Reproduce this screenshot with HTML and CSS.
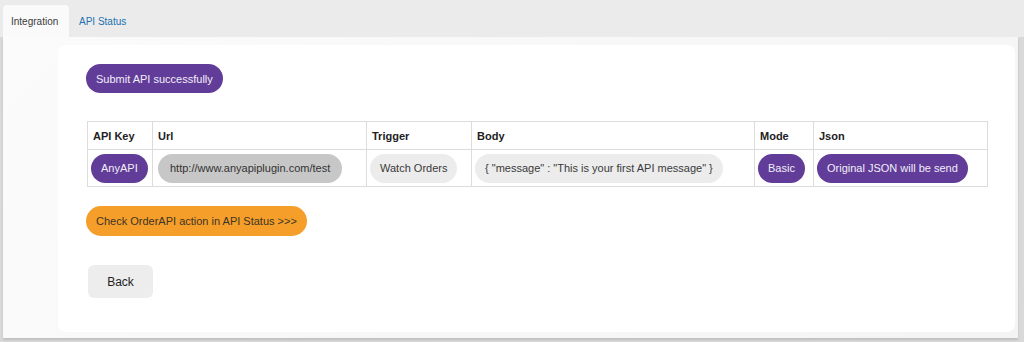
FILE: index.html
```html
<!DOCTYPE html>
<html>
<head>
<meta charset="utf-8">
<link rel="stylesheet" href="styles.css">
</head>
<body>
<div class="tabs">
  <div class="tab active">Integration</div>
  <div class="tab">API Status</div>
</div>
<div class="panel">
  <div class="card">
    <div class="pill purple">Submit API successfully</div>
    <table class="grid">
      <colgroup>
        <col class="c1"><col class="c2"><col class="c3"><col class="c4"><col class="c5"><col class="c6">
      </colgroup>
      <thead>
        <tr><th>API Key</th><th>Url</th><th>Trigger</th><th>Body</th><th>Mode</th><th>Json</th></tr>
      </thead>
      <tbody>
        <tr>
          <td><span class="pill purple">AnyAPI</span></td>
          <td><span class="pill grey url">http://www.anyapiplugin.com/test</span></td>
          <td><span class="pill light">Watch Orders</span></td>
          <td><span class="pill light">{ "message" : "This is your first API message" }</span></td>
          <td><span class="pill purple">Basic</span></td>
          <td><span class="pill purple">Original JSON will be send</span></td>
        </tr>
      </tbody>
    </table>
    <div class="pill orange check">Check OrderAPI action in API Status &gt;&gt;&gt;</div>
    <div class="back">Back</div>
  </div>
</div>
</body>
</html>
```
FILE: styles.css
```css
* { box-sizing: border-box; }
html, body { margin: 0; padding: 0; }
body {
  width: 1024px;
  height: 342px;
  overflow: hidden;
  background: #d9d9d9;
  font-family: "Liberation Sans", Arial, sans-serif;
  color: #333;
}
.tabs {
  display: flex;
  align-items: flex-end;
  height: 37px;
  padding-left: 3px;
  background: #ebebeb;
}
.tab {
  height: 32px;
  display: flex;
  align-items: center;
  padding: 0 10px;
  font-size: 10px;
  color: #2271b1;
}
.tab.active {
  width: 66px;
  padding: 0 8px;
  background: #fafafa;
  color: #3a3a3a;
  border-radius: 4px 4px 0 0;
}
.panel {
  height: 301px;
  margin: 0 6px 0 3px;
  padding: 8px 3px 6px 55px;
  background: linear-gradient(135deg, #fbfbfb 0%, #f4f4f4 100%);
  box-shadow: 0 2px 2px rgba(0,0,0,0.12);
}
.card {
  height: 287px;
  background: #fff;
  border-radius: 8px;
  padding: 19px 28px 0 28px;
  display: flex;
  flex-direction: column;
  align-items: flex-start;
}
.pill {
  display: inline-flex;
  align-items: center;
  justify-content: center;
  height: 29px;
  padding: 0 10px;
  border-radius: 15px;
  font-size: 11px;
  white-space: nowrap;
}
.purple { background: #613c99; color: #f2eef8; }
.grey { background: #c7c7c7; color: #333; }
.light { background: #ececec; color: #3a3a3a; }
.orange { background: #f59e2a; color: #3d3526; }
.url { padding: 0 12px; margin-left: 2px; }
.grid {
  margin-top: 28px;
  margin-left: 1px;
  width: 900px;
  border-collapse: collapse;
  table-layout: fixed;
}
.c1 { width: 65px; }
.c2 { width: 214px; }
.c3 { width: 105px; }
.c4 { width: 283px; }
.c5 { width: 59px; }
.c6 { width: 174px; }
.grid th, .grid td {
  border: 1px solid #dcdcdc;
  text-align: left;
}
.grid th {
  height: 28px;
  padding: 0 5px;
  font-size: 11px;
  font-weight: 700;
  color: #222;
}
.grid td {
  height: 37px;
  padding: 0 3px;
}
.check { margin-top: 19px; height: 30px; }
.back {
  margin-top: 29px;
  margin-left: 2px;
  width: 65px;
  height: 33px;
  border-radius: 6px;
  background: #ededed;
  display: flex;
  align-items: center;
  justify-content: center;
  font-size: 12px;
  color: #222;
}
```
